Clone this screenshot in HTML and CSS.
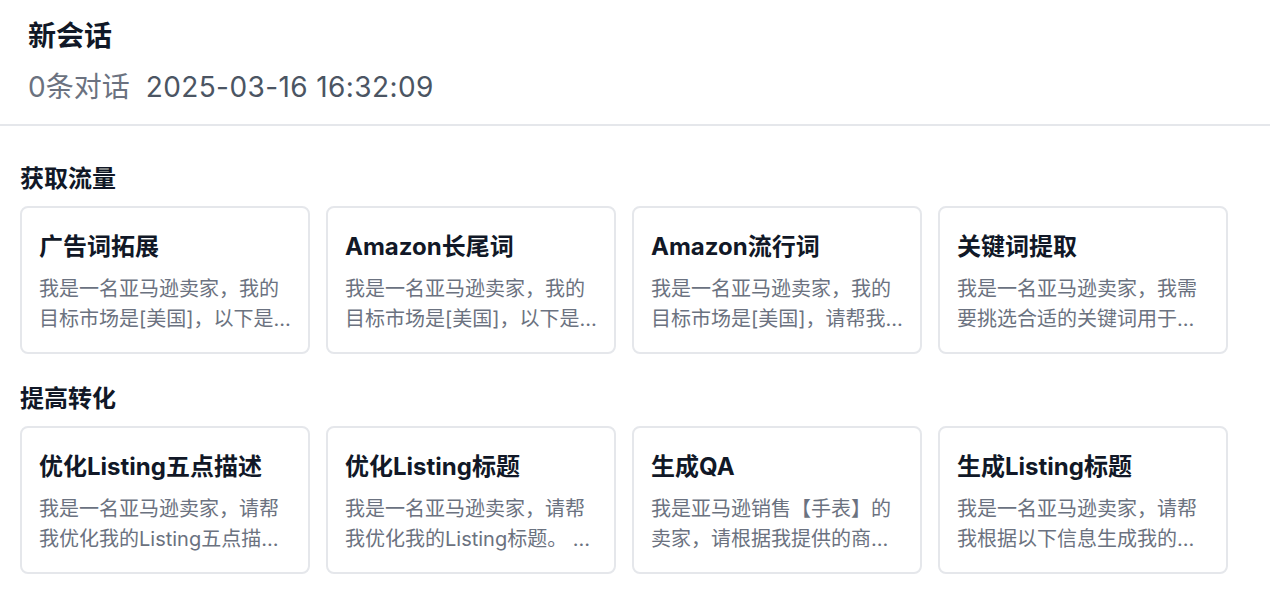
FILE: index.html
```html
<!DOCTYPE html>
<html lang="zh-CN">
<head>
<meta charset="utf-8">
<title>新会话</title>
<link rel="stylesheet" href="styles.css">
</head>
<body>
<header class="header">
  <h1 class="title">新会话</h1>
  <div class="meta"><span class="count">0条对话</span><span class="date">2025-03-16 16:32:09</span></div>
</header>
<main class="main">
  <section class="section">
    <h2 class="section-title">获取流量</h2>
    <div class="grid">
      <div class="card"><h3 class="card-title">广告词拓展</h3><p class="card-desc">我是一名亚马逊卖家，我的目标市场是[美国]，以下是我的产品核心关键词，请帮我拓展更多广告词。</p></div>
      <div class="card"><h3 class="card-title">Amazon长尾词</h3><p class="card-desc">我是一名亚马逊卖家，我的目标市场是[美国]，以下是我的产品核心关键词，请帮我生成长尾词。</p></div>
      <div class="card"><h3 class="card-title">Amazon流行词</h3><p class="card-desc">我是一名亚马逊卖家，我的目标市场是[美国]，请帮我找出当前品类中的流行词。</p></div>
      <div class="card"><h3 class="card-title">关键词提取</h3><p class="card-desc">我是一名亚马逊卖家，我需要挑选合适的关键词用于我的产品Listing。</p></div>
    </div>
  </section>
  <section class="section">
    <h2 class="section-title">提高转化</h2>
    <div class="grid">
      <div class="card"><h3 class="card-title">优化Listing五点描述</h3><p class="card-desc">我是一名亚马逊卖家，请帮我优化我的Listing五点描述，使其更具吸引力。</p></div>
      <div class="card"><h3 class="card-title">优化Listing标题</h3><p class="card-desc">我是一名亚马逊卖家，请帮我优化我的Listing标题。 以下是我的产品信息。</p></div>
      <div class="card"><h3 class="card-title">生成QA</h3><p class="card-desc">我是亚马逊销售【手表】的卖家，请根据我提供的商品信息生成常见问答。</p></div>
      <div class="card"><h3 class="card-title">生成Listing标题</h3><p class="card-desc">我是一名亚马逊卖家，请帮我根据以下信息生成我的Listing标题。</p></div>
    </div>
  </section>
</main>
</body>
</html>
```
FILE: styles.css
```css
* { box-sizing: border-box; }
html, body { margin: 0; padding: 0; background: #ffffff; }
body {
  font-family: "Inter", "Noto Sans CJK SC", sans-serif;
  color: #111827;
  width: 1270px;
}
.header {
  padding: 18px 28px 19px;
  border-bottom: 2px solid #e5e7eb;
}
.title {
  margin: 0;
  font-size: 28px;
  line-height: 36px;
  font-weight: 700;
  color: #111827;
}
.meta {
  margin-top: 15px;
  font-size: 28px;
  line-height: 36px;
  display: flex;
  gap: 16px;
}
.count { color: #6b7280; }
.date { color: #4b5563; letter-spacing: 0.4px; }
.main { padding: 0 20px; }
.section-title {
  margin: 37px 0 11px;
  font-size: 24px;
  line-height: 32px;
  font-weight: 700;
  color: #111827;
}
.section + .section .section-title { margin-top: 29px; }
.grid {
  display: grid;
  grid-template-columns: repeat(4, 290px);
  gap: 16px;
}
.card {
  height: 148px;
  border: 2px solid #e5e7eb;
  border-radius: 8px;
  padding: 22px 17px 18px;
  background: #fff;
}
.card-title {
  margin: 0;
  font-size: 24px;
  line-height: 34px;
  font-weight: 700;
  color: #111827;
  white-space: nowrap;
}
.card-desc {
  margin: 10px 0 0;
  font-size: 20px;
  line-height: 30px;
  color: #6b7280;
  display: -webkit-box;
  -webkit-line-clamp: 2;
  -webkit-box-orient: vertical;
  overflow: hidden;
}
```
